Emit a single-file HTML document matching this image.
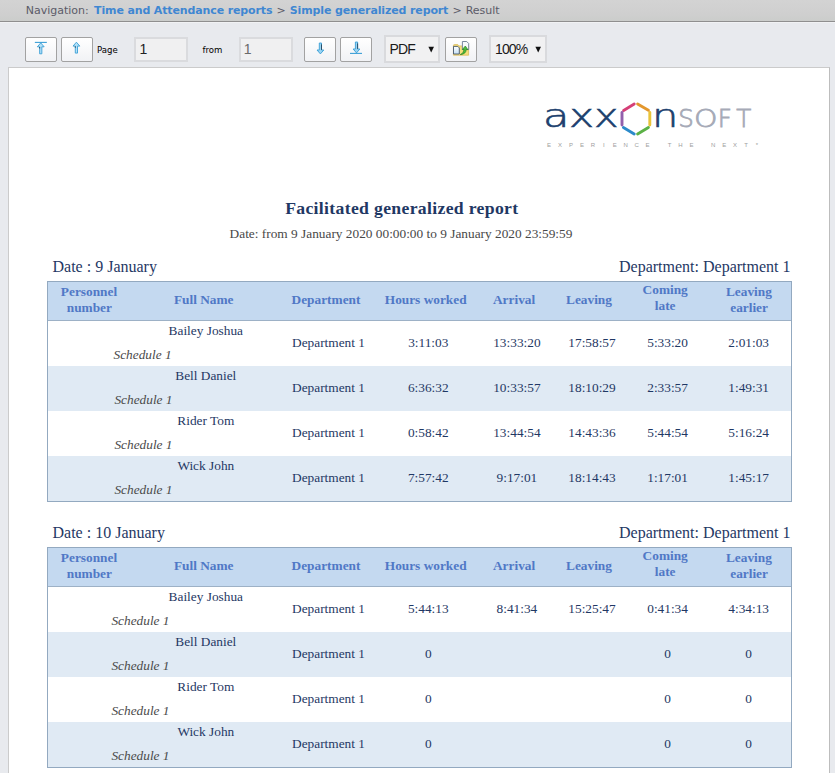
<!DOCTYPE html>
<html lang="en">
<head>
<meta charset="utf-8">
<title>Result</title>
<style>
html,body{margin:0;padding:0;}
body{width:835px;height:773px;overflow:hidden;background:#e8eaee;position:relative;font-family:"Liberation Serif",serif;}
.a{position:absolute;white-space:nowrap;}
.c{position:absolute;white-space:nowrap;width:200px;text-align:center;}
#nav{left:0;top:0;width:835px;height:21px;background:linear-gradient(#d3d3d3,#cfcfcf 70%,#cbcdcb);border-bottom:1px solid #8f8f8f;box-shadow:0 1px 0 #f1f2f4;}
#navtxt{left:25.7px;top:4px;font-family:"DejaVu Sans","Liberation Sans",sans-serif;font-size:11px;line-height:14px;color:#5b5b68;}
#navtxt b{color:#3f87d2;font-weight:bold;letter-spacing:-0.13px;}
.btn{top:37px;width:30px;height:23px;border:1px solid #a2a2a2;border-radius:2px;background:linear-gradient(#ffffff,#f1f2f5);}
.btn svg{position:absolute;left:0;top:0;}
.inp{top:37px;height:21px;border:2px solid #dadbde;background:#f0f0f1;font-family:"Liberation Sans",sans-serif;font-size:14px;line-height:20px;color:#222;}
.sel{top:35px;height:24px;border:2px solid #d9dadd;background:#f1f1f2;font-family:"Liberation Sans",sans-serif;font-size:14px;letter-spacing:-0.9px;color:#1a1a1a;}
.lbl{font-family:"DejaVu Sans Condensed","DejaVu Sans","Liberation Sans",sans-serif;font-size:9.5px;line-height:12px;color:#000;}
#page{left:8px;top:67px;width:820px;height:720px;background:#fff;border:1px solid #cbcbcb;border-right:1px solid #bdbdbd;}
.tb{position:absolute;left:47px;width:743px;border:1px solid #93a9c0;background:#fff;}
.th{position:absolute;left:0;top:0;width:743px;height:38px;background:#c4d9f0;border-bottom:1px solid #9db1c6;}
.alt{position:absolute;left:0;width:743px;height:45px;background:#e0eaf4;}
.h{font-size:13.33px;font-weight:bold;color:#5078c6;line-height:16px;}
.d{font-size:13.33px;color:#1f3864;line-height:16px;}
.s{font-size:13.33px;font-style:italic;color:#4a4a4a;line-height:16px;}
.sec{font-size:16px;color:#1f3864;line-height:18px;}
</style>
</head>
<body>
<div id="nav" class="a"></div>
<div id="navtxt" class="a">Navigation: <b style="margin-left:1.800px">Time and Attendance reports</b><span style="margin-left:0.800px"> &gt; </span><b style="margin-left:0.500px">Simple generalized report</b><span style="margin-left:0.700px"> &gt; </span><span style="margin-left:0.500px">Result</span></div>

<div class="a btn" style="left:25px;"><svg width="30" height="23" viewBox="0 0 30 23"><path d="M8.85 4.4h12" stroke="#3a9fd6" stroke-width="1.100" fill="none"/><path d="M14.75 4.9 l-3.400 3.900 h2.300 v7 h2.200 v-7 h2.300 Z" fill="#b4e1f8" stroke="#3a9fd6" stroke-width="0.900" stroke-linejoin="miter"/><path d="M13.65 9.10v1.300" stroke="#1b2a3a" stroke-width="0.800" fill="none"/></svg></div>
<div class="a btn" style="left:61px;"><svg width="30" height="23" viewBox="0 0 30 23"><path d="M14.4 4.2 l-3.400 3.900 h2.300 v7 h2.200 v-7 h2.300 Z" fill="#b4e1f8" stroke="#3a9fd6" stroke-width="0.900" stroke-linejoin="miter"/><path d="M13.30 8.40v1.300" stroke="#1b2a3a" stroke-width="0.800" fill="none"/></svg></div>
<div class="a lbl" style="left:97px;top:44px;">Page</div>
<div class="a inp" style="left:134px;width:50px;"><span style="padding-left:3.500px;">1</span></div>
<div class="a lbl" style="left:202.5px;top:44px;">from</div>
<div class="a inp" style="left:239px;width:50px;"><span style="padding-left:2.800px;color:#6a6a6a;">1</span></div>
<div class="a btn" style="left:304px;"><svg width="30" height="23" viewBox="0 0 30 23"><path d="M15.4 15.9 l-3.400 -3.900 h2.300 v-7 h2.200 v7 h2.300 Z" fill="#9ad4f3" stroke="#3a9fd6" stroke-width="0.900" stroke-linejoin="miter"/><path d="M16.50 6.40v5.500" stroke="#1b2a3a" stroke-width="0.700" fill="none"/></svg></div>
<div class="a btn" style="left:340px;"><svg width="30" height="23" viewBox="0 0 30 23"><path d="M15.5 14.9 l-3.400 -3.900 h2.300 v-7 h2.200 v7 h2.300 Z" fill="#9ad4f3" stroke="#3a9fd6" stroke-width="0.900" stroke-linejoin="miter"/><path d="M16.60 5.40v5.500" stroke="#1b2a3a" stroke-width="0.700" fill="none"/><path d="M9 15.4h12" stroke="#3a9fd6" stroke-width="1.100" fill="none"/></svg></div>
<div class="a sel" style="left:384px;width:52px;"><span class="a" style="left:3.5px;top:0;line-height:25px;">PDF</span><svg class="a" style="left:42px;top:9px" width="7" height="7" viewBox="0 0 7 7"><path d="M0.400 0.800h5.600L3.200 6.600z" fill="#111"/></svg></div>
<div class="a btn" style="left:445px;"><svg width="30" height="23" viewBox="0 0 30 23">
<defs><linearGradient id="dg" x1="0" y1="0" x2="0" y2="1"><stop offset="0" stop-color="#ffffff"/><stop offset="1" stop-color="#c4e0f6"/></linearGradient></defs>
<path d="M7.400 7.600 q0 -1 1 -1 h3.400 l1 1.300 h9.800 v9.300 h-15.200z" fill="#f5de7c" stroke="#d9b550" stroke-width="0.700"/>
<path d="M16.400 3.500 h4.300 l2 2 v6 h-6.300z" fill="#f7fafd" stroke="#6b7c93" stroke-width="0.900"/>
<path d="M7.500 8.400 h4.300 l1.500 1.500 v6.100 h-5.800z" fill="url(#dg)" stroke="#44566e" stroke-width="0.900"/>
<path d="M14.200 16.600 C16.600 15.600 17.800 13.600 17.900 11.400 L16.300 11.500 L19.300 8 L22 11.700 L20.300 11.500 C20.100 14.400 18 16.600 14.200 16.600Z" fill="#4dbb3c" stroke="#1f7a1c" stroke-width="0.600"/>
</svg></div>
<div class="a sel" style="left:489px;width:54px;"><span class="a" style="left:4px;top:0;line-height:25px;">100%</span><svg class="a" style="left:44px;top:9px" width="7" height="7" viewBox="0 0 7 7"><path d="M0.400 0.800h5.600L3.200 6.600z" fill="#111"/></svg></div>
<div id="page" class="a"></div>
<svg class="a" style="left:540px;top:95px;" width="230" height="62" viewBox="0 0 230 62">
<g fill="none" stroke-width="2.900" stroke-linecap="round">
<path d="M83.6 15.4L94.2 9.0" stroke="#d53f77"/>
<path d="M97.6 9.0L108.4 15.2" stroke="#e3972d"/>
<path d="M109.8 17.4L109.8 30.0" stroke="#e9c33a"/>
<path d="M108.4 32.5L97.6 39.0" stroke="#5bb146"/>
<path d="M94.2 39.0L83.4 32.5" stroke="#2b8aca"/>
<path d="M82.0 30.0L82.0 17.4" stroke="#9260ac"/>
</g>
<text y="51.7" font-family="Liberation Sans, sans-serif" font-size="6" fill="#9e9e9e" text-anchor="middle" x="9.0 20.0 30.9 41.9 52.8 63.8 74.7 85.6 96.6 107.5 118.5 129.5 140.4 151.4 162.3 173.2 184.2 195.1 206.1 217.0">EXPERIENCE THE NEXT*</text>
</svg>
<div class="a" style="left:0;top:98.8px;font-family:'DejaVu Sans','Liberation Sans',sans-serif;font-weight:200;font-size:31.5px;line-height:34px;color:#1c3f6e;-webkit-text-stroke:0.6px #1c3f6e;"><span style="position:absolute;left:543.2px;top:0;display:block;transform:scaleX(1.37);transform-origin:0 0;">a</span><span style="position:absolute;left:568.9px;top:0;display:block;transform:scaleX(1.35);transform-origin:0 0;">x</span><span style="position:absolute;left:594.0px;top:0;display:block;transform:scaleX(1.32);transform-origin:0 0;">x</span><span style="position:absolute;left:652.1px;top:0;display:block;transform:scaleX(1.32);transform-origin:0 0;">n</span></div>
<div class="a" style="left:678.3px;top:104.1px;font-family:'DejaVu Sans','Liberation Sans',sans-serif;font-weight:200;font-size:24.5px;line-height:30px;color:#a6aab7;-webkit-text-stroke:0.8px #a6aab7;">S<span style="display:inline-block;transform:scaleX(1.22);transform-origin:0 50%;margin-left:0.4px;margin-right:4.1px;">O</span><span style="margin-right:4.6px;">F</span>T</div>
<div class="a" style="left:101.8px;width:600px;text-align:center;top:197px;font-size:17.7px;letter-spacing:0.323px;font-weight:bold;color:#1f3864;line-height:22px;">Facilitated generalized report</div>
<div class="a" style="left:101px;width:600px;text-align:center;top:226px;font-size:13.33px;color:#484848;line-height:16px;">Date: from 9 January 2020 00:00:00 to 9 January 2020 23:59:59</div>
<div class="a sec" style="left:52.5px;top:258px;">Date : 9 January</div>
<div class="a sec" style="right:44.5px;top:258px;">Department: Department 1</div>
<div class="tb" style="top:281px;height:219px;">
<div class="th"></div>
<div class="alt" style="top:84px;"></div><div class="alt" style="top:174px;"></div>
<div class="c h" style="left:-59.0px;top:2.0px;">Personnel</div>
<div class="c h" style="left:-58.7px;top:18.0px;">number</div>
<div class="c h" style="left:55.7px;top:10.1px;">Full Name</div>
<div class="c h" style="left:178.0px;top:10.1px;">Department</div>
<div class="c h" style="left:277.7px;top:10.1px;">Hours worked</div>
<div class="c h" style="left:366.1px;top:10.1px;">Arrival</div>
<div class="c h" style="left:441.0px;top:10.1px;">Leaving</div>
<div class="c h" style="left:517.2px;top:0.0px;">Coming</div>
<div class="c h" style="left:517.2px;top:15.5px;">late</div>
<div class="c h" style="left:600.9px;top:2.0px;">Leaving</div>
<div class="c h" style="left:601.1px;top:17.5px;">earlier</div>
<div class="c d" style="left:57.8px;top:41.3px;">Bailey Joshua</div>
<div class="a s" style="left:65.5px;top:64.5px;">Schedule 1</div>
<div class="c d" style="left:180.5px;top:53.3px;">Department 1</div>
<div class="c d" style="left:280.3px;top:53.3px;">3:11:03</div>
<div class="c d" style="left:368.9px;top:53.3px;">13:33:20</div>
<div class="c d" style="left:444.0px;top:53.3px;">17:58:57</div>
<div class="c d" style="left:519.6px;top:53.3px;">5:33:20</div>
<div class="c d" style="left:600.7px;top:53.3px;">2:01:03</div>
<div class="c d" style="left:57.8px;top:86.3px;">Bell Daniel</div>
<div class="a s" style="left:66.4px;top:109.5px;">Schedule 1</div>
<div class="c d" style="left:180.5px;top:98.3px;">Department 1</div>
<div class="c d" style="left:280.3px;top:98.3px;">6:36:32</div>
<div class="c d" style="left:368.9px;top:98.3px;">10:33:57</div>
<div class="c d" style="left:444.0px;top:98.3px;">18:10:29</div>
<div class="c d" style="left:519.6px;top:98.3px;">2:33:57</div>
<div class="c d" style="left:600.7px;top:98.3px;">1:49:31</div>
<div class="c d" style="left:57.8px;top:131.3px;">Rider Tom</div>
<div class="a s" style="left:66.4px;top:154.5px;">Schedule 1</div>
<div class="c d" style="left:180.5px;top:143.3px;">Department 1</div>
<div class="c d" style="left:280.3px;top:143.3px;">0:58:42</div>
<div class="c d" style="left:368.9px;top:143.3px;">13:44:54</div>
<div class="c d" style="left:444.0px;top:143.3px;">14:43:36</div>
<div class="c d" style="left:519.6px;top:143.3px;">5:44:54</div>
<div class="c d" style="left:600.7px;top:143.3px;">5:16:24</div>
<div class="c d" style="left:57.8px;top:176.3px;">Wick John</div>
<div class="a s" style="left:66.4px;top:199.5px;">Schedule 1</div>
<div class="c d" style="left:180.5px;top:188.3px;">Department 1</div>
<div class="c d" style="left:280.3px;top:188.3px;">7:57:42</div>
<div class="c d" style="left:368.9px;top:188.3px;">9:17:01</div>
<div class="c d" style="left:444.0px;top:188.3px;">18:14:43</div>
<div class="c d" style="left:519.6px;top:188.3px;">1:17:01</div>
<div class="c d" style="left:600.7px;top:188.3px;">1:45:17</div>
</div>
<div class="a sec" style="left:52.5px;top:524px;">Date : 10 January</div>
<div class="a sec" style="right:44.5px;top:524px;">Department: Department 1</div>
<div class="tb" style="top:547px;height:219px;">
<div class="th"></div>
<div class="alt" style="top:84px;"></div><div class="alt" style="top:174px;"></div>
<div class="c h" style="left:-59.0px;top:2.0px;">Personnel</div>
<div class="c h" style="left:-58.7px;top:18.0px;">number</div>
<div class="c h" style="left:55.7px;top:10.1px;">Full Name</div>
<div class="c h" style="left:178.0px;top:10.1px;">Department</div>
<div class="c h" style="left:277.7px;top:10.1px;">Hours worked</div>
<div class="c h" style="left:366.1px;top:10.1px;">Arrival</div>
<div class="c h" style="left:441.0px;top:10.1px;">Leaving</div>
<div class="c h" style="left:517.2px;top:0.0px;">Coming</div>
<div class="c h" style="left:517.2px;top:15.5px;">late</div>
<div class="c h" style="left:600.9px;top:2.0px;">Leaving</div>
<div class="c h" style="left:601.1px;top:17.5px;">earlier</div>
<div class="c d" style="left:57.8px;top:41.3px;">Bailey Joshua</div>
<div class="a s" style="left:63.4px;top:64.5px;">Schedule 1</div>
<div class="c d" style="left:180.5px;top:53.3px;">Department 1</div>
<div class="c d" style="left:280.3px;top:53.3px;">5:44:13</div>
<div class="c d" style="left:368.9px;top:53.3px;">8:41:34</div>
<div class="c d" style="left:444.0px;top:53.3px;">15:25:47</div>
<div class="c d" style="left:519.6px;top:53.3px;">0:41:34</div>
<div class="c d" style="left:600.7px;top:53.3px;">4:34:13</div>
<div class="c d" style="left:57.8px;top:86.3px;">Bell Daniel</div>
<div class="a s" style="left:63.4px;top:109.5px;">Schedule 1</div>
<div class="c d" style="left:180.5px;top:98.3px;">Department 1</div>
<div class="c d" style="left:280.3px;top:98.3px;">0</div>
<div class="c d" style="left:519.6px;top:98.3px;">0</div>
<div class="c d" style="left:600.7px;top:98.3px;">0</div>
<div class="c d" style="left:57.8px;top:131.3px;">Rider Tom</div>
<div class="a s" style="left:63.4px;top:154.5px;">Schedule 1</div>
<div class="c d" style="left:180.5px;top:143.3px;">Department 1</div>
<div class="c d" style="left:280.3px;top:143.3px;">0</div>
<div class="c d" style="left:519.6px;top:143.3px;">0</div>
<div class="c d" style="left:600.7px;top:143.3px;">0</div>
<div class="c d" style="left:57.8px;top:176.3px;">Wick John</div>
<div class="a s" style="left:63.4px;top:199.5px;">Schedule 1</div>
<div class="c d" style="left:180.5px;top:188.3px;">Department 1</div>
<div class="c d" style="left:280.3px;top:188.3px;">0</div>
<div class="c d" style="left:519.6px;top:188.3px;">0</div>
<div class="c d" style="left:600.7px;top:188.3px;">0</div>
</div>
</body>
</html>
